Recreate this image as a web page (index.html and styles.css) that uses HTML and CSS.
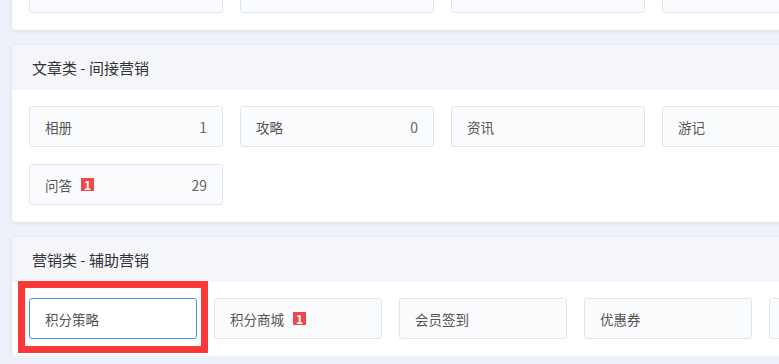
FILE: index.html
```html
<!DOCTYPE html>
<html lang="zh-CN">
<head>
    <meta charset="UTF-8">
    <meta name="viewport" content="width=device-width, initial-scale=1.0">
    <title>营销管理</title>
    <link rel="stylesheet" href="styles.css">
</head>
<body>
    <div class="page">
        <div class="card card-top">
            <div class="card-body grid-4">
                <div class="item"></div>
                <div class="item"></div>
                <div class="item"></div>
                <div class="item"></div>
            </div>
        </div>

        <div class="card">
            <div class="card-header">文章类 - 间接营销</div>
            <div class="card-body grid-4">
                <div class="item"><span class="label">相册</span><span class="count">1</span></div>
                <div class="item"><span class="label">攻略</span><span class="count">0</span></div>
                <div class="item"><span class="label">资讯</span></div>
                <div class="item"><span class="label">游记</span></div>
                <div class="item"><span class="label">问答<span class="badge">1</span></span><span class="count">29</span></div>
            </div>
        </div>

        <div class="card card-marked">
            <div class="card-header">营销类 - 辅助营销</div>
            <div class="card-body grid-5">
                <div class="item active"><span class="label">积分策略</span></div>
                <div class="item"><span class="label">积分商城<span class="badge">1</span></span></div>
                <div class="item"><span class="label">会员签到</span></div>
                <div class="item"><span class="label">优惠券</span></div>
                <div class="item"></div>
            </div>
            <div class="highlight"></div>
        </div>
    </div>
</body>
</html>
```

FILE: styles.css
```css
html, body {
    margin: 0;
    padding: 0;
    overflow: hidden;
}
body {
    background-color: #eef1f9;
    font-family: "Noto Sans CJK SC", "Liberation Sans", sans-serif;
    color: #333;
}
.page {
    display: flex;
    flex-direction: column;
    gap: 15px;
    padding-left: 12px;
    margin-top: -44px;
    width: 880px;
}
.card {
    background-color: #fff;
    border-radius: 4px;
    box-shadow: 0 1px 4px rgba(40, 60, 120, 0.1);
    overflow: hidden;
}
.card-header {
    height: 45px;
    line-height: 45px;
    padding-left: 20px;
    background-color: #f4f6fa;
    font-size: 15px;
    color: #333;
}
.card-body {
    display: grid;
    gap: 17px;
    padding: 16px 17px 17px;
}
.grid-4 {
    grid-template-columns: repeat(4, 194px);
}
.grid-5 {
    grid-template-columns: repeat(5, 168px);
}
.item {
    height: 41px;
    box-sizing: border-box;
    border: 1px solid #dfe5f0;
    border-radius: 3px;
    background-color: #fafbfc;
    display: flex;
    align-items: center;
    justify-content: space-between;
    padding: 0 15px;
    font-size: 13.5px;
    color: #555;
}
.item.active {
    border-color: #4b8ff0;
    background-color: #fff;
}
.label {
    display: flex;
    align-items: center;
}
.count {
    font-size: 14px;
    color: #666;
}
.badge {
    display: inline-block;
    width: 13px;
    height: 13px;
    line-height: 13px;
    margin-left: 9px;
    background-color: #f2464b;
    color: #fff;
    font-size: 12px;
    font-weight: bold;
    text-align: center;
}
.card-marked {
    position: relative;
    overflow: visible;
}
.highlight {
    position: absolute;
    left: 6px;
    top: 44px;
    width: 190px;
    height: 72px;
    box-sizing: border-box;
    border: 7px solid #fa3838;
}
```
